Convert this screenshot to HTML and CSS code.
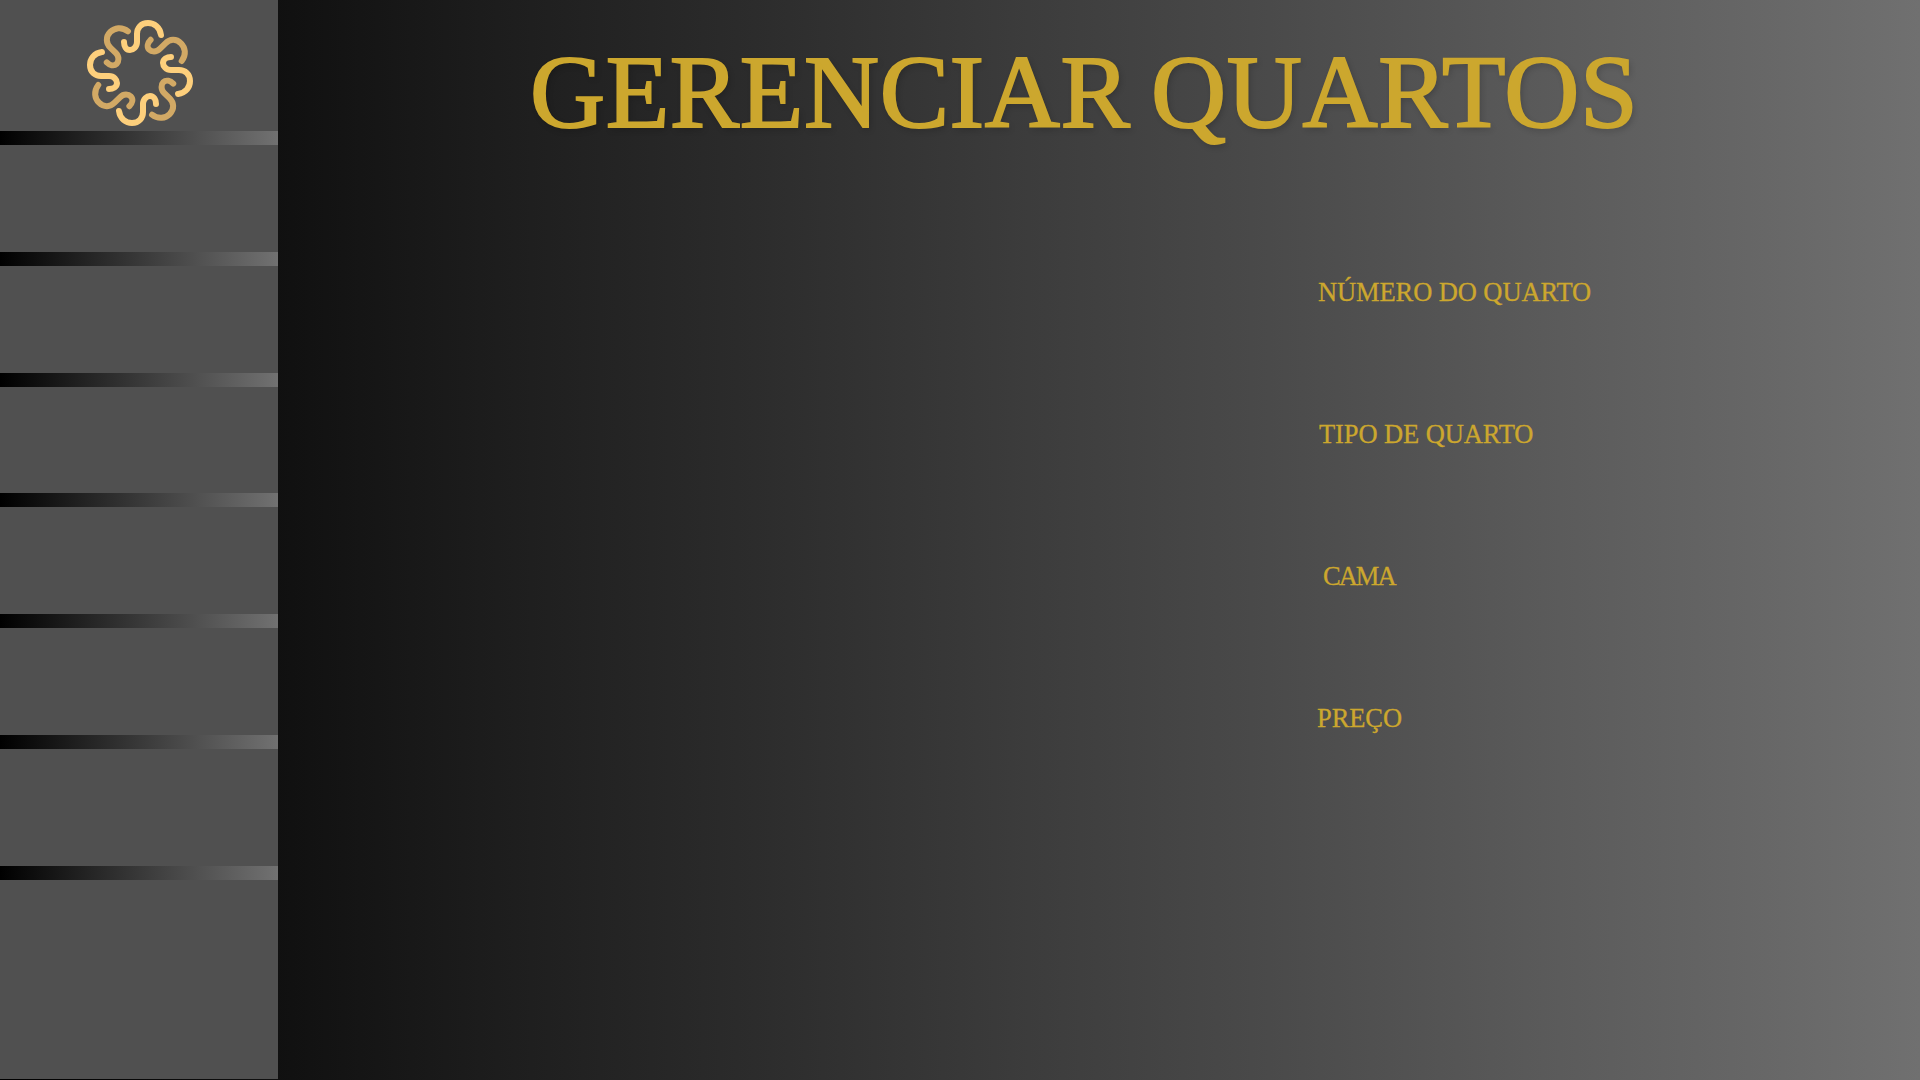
FILE: index.html
```html
<!DOCTYPE html>
<html lang="pt-BR">
<head>
    <meta charset="UTF-8">
    <meta name="viewport" content="width=device-width, initial-scale=1.0">
    <title>Gerenciar Quartos</title>
    <link rel="stylesheet" href="styles.css">
</head>
<body>
    <aside class="sidebar">
        <div class="logo-box">
            <svg class="logo" viewBox="-55 -55 110 110" width="110" height="110">
                <defs>
                    <path id="curl" d="M21 -38 C20 -46 14 -50 8 -50 C1 -50 -3 -45 -3 -39 C-3 -35 -3 -33 -3 -31 C-3 -26 -7 -23 -10 -23 C-14 -23 -16 -27 -16 -31"/>
                </defs>
                <g class="curl-light">
                    <use href="#curl"/>
                    <use href="#curl" transform="rotate(90)"/>
                    <use href="#curl" transform="rotate(180)"/>
                    <use href="#curl" transform="rotate(270)"/>
                </g>
                <g class="curl-dark">
                    <use href="#curl" transform="rotate(45)"/>
                    <use href="#curl" transform="rotate(135)"/>
                    <use href="#curl" transform="rotate(225)"/>
                    <use href="#curl" transform="rotate(315)"/>
                </g>
            </svg>
        </div>
        <div class="divider"></div>
        <div class="nav-slot"></div>
        <div class="divider"></div>
        <div class="nav-slot"></div>
        <div class="divider"></div>
        <div class="nav-slot nav-slot-short"></div>
        <div class="divider"></div>
        <div class="nav-slot"></div>
        <div class="divider"></div>
        <div class="nav-slot"></div>
        <div class="divider"></div>
        <div class="nav-slot nav-slot-tall"></div>
        <div class="divider"></div>
    </aside>

    <main class="content">
        <h1 class="title">GERENCIAR QUARTOS</h1>
        <form class="room-form">
            <label class="field-label label-number">NÚMERO DO QUARTO</label>
            <label class="field-label label-type">TIPO DE QUARTO</label>
            <label class="field-label label-bed">CAMA</label>
            <label class="field-label label-price">PREÇO</label>
        </form>
    </main>
</body>
</html>
```

FILE: styles.css
```css
* {
    box-sizing: border-box;
}

html, body {
    height: 100%;
}

body {
    margin: 0;
    display: flex;
    overflow: hidden;
    background: linear-gradient(to right, #000, #707070);
    font-family: "Liberation Serif", serif;
    color: #cca72e;
}

/* barra lateral */
.sidebar {
    width: 278px;
    height: 1079px;
    flex-shrink: 0;
    background: #505050;
}

.logo-box {
    height: 131px;
    padding: 18px 0 0 85px;
}

.logo {
    display: block;
}

.curl-light, .curl-dark {
    fill: none;
    stroke-width: 6;
    stroke-linecap: round;
}

.curl-light {
    stroke: #fdcf7c;
}

.curl-dark {
    stroke: #d2a965;
}

.divider {
    height: 14px;
    background: linear-gradient(to right, #000, #717171);
}

.nav-slot {
    height: 107px;
}

.nav-slot-short {
    height: 106px;
}

.nav-slot-tall {
    height: 117px;
}

/* conteudo */
.content {
    flex: 1;
    min-width: 0;
}

.title {
    margin: 30px 0 0 252px;
    font-size: 104px;
    line-height: 124px;
    font-weight: normal;
    letter-spacing: 0.6px;
    word-spacing: -6px;
    white-space: nowrap;
    -webkit-text-stroke: 2px #cca72e;
    text-shadow: 2px 3px 6px rgba(0, 0, 0, 0.2);
}

.room-form {
    display: flex;
    flex-direction: column;
    align-items: flex-start;
    gap: 110px;
    margin-top: 122px;
}

.field-label {
    font-size: 26.5px;
    line-height: 32px;
    letter-spacing: -0.1px;
    white-space: nowrap;
    -webkit-text-stroke: 0.3px #cca72e;
}

.label-number {
    margin-left: 1040px;
}

.label-type {
    margin-left: 1041px;
}

.label-bed {
    margin-left: 1045px;
    letter-spacing: -2px;
}

.label-price {
    margin-left: 1039px;
}
```
